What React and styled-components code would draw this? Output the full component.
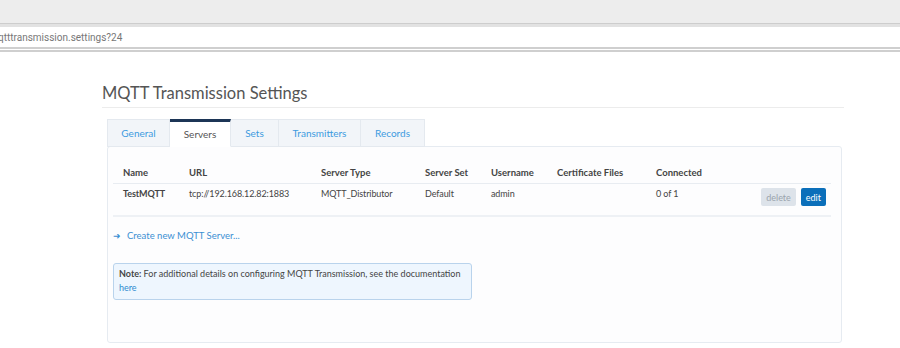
import React from "react";
import styled, { createGlobalStyle } from "styled-components";

const Global = createGlobalStyle`
  html, body { margin: 0; padding: 0; background: #ffffff; }
  body { font-family: Lato, "Open Sans", sans-serif; color: #444; overflow: hidden; }
`;

const BrowserTop = styled.div`
  height: 23px;
  background: #ededed;
  border-bottom: 1px solid #cdcdcd;
`;

const AddressBar = styled.div`
  height: 20px;
  background: #ffffff;
  border-top: 3px solid #e2e2e2;
  border-bottom: 5px double #cfcfcf;
  display: flex;
  align-items: center;
  font-family: Roboto, "Noto Sans", sans-serif;
  font-size: 10px;
  color: #777;
`;

const UrlText = styled.span`
  margin-left: -2px;
  white-space: nowrap;
`;

const Main = styled.main`
  margin-left: 102px;
  width: 742px;
  padding-top: 29px;
`;

const Title = styled.h1`
  margin: 0;
  font-weight: 400;
  font-size: 16.5px;
  line-height: 24px;
  color: #555;
  padding-bottom: 2px;
  border-bottom: 1px solid #ececec;
`;

const Tabs = styled.nav`
  display: flex;
  margin: 11px 0 0 5px;
`;

const Tab = styled.div`
  box-sizing: border-box;
  height: 28px;
  width: ${(p) => p.$w}px;
  display: flex;
  align-items: center;
  justify-content: center;
  font-size: 10px;
  color: ${(p) => (p.$active ? "#555" : "#3d9be0")};
  background: ${(p) => (p.$active ? "#ffffff" : "#f2f5f9")};
  border: 1px solid #e4e9ef;
  border-top: ${(p) => (p.$active ? "3px solid #1c3556" : "1px solid #e4e9ef")};
  border-bottom: ${(p) => (p.$active ? "1px solid #fff" : "1px solid #e4e9ef")};
  border-left: ${(p) => (p.$first ? "1px solid #e4e9ef" : "none")};
  margin-bottom: -1px;
  position: relative;
  z-index: 1;
`;

const Panel = styled.section`
  box-sizing: border-box;
  margin-left: 5px;
  width: 735px;
  height: 197px;
  border: 1px solid #e6ebf1;
  border-radius: 3px;
  background: #fdfdfe;
  padding: 20px 10px 0 5px;
`;

const Table = styled.div`
  display: grid;
  grid-template-columns: 66px 132px 104px 66px 66px 99px 1fr auto;
  width: 718px;
  color: #444;
`;

const HeadCell = styled.div`
  font-weight: 700;
  font-size: 9.5px;
  padding: 0 0 4px 10px;
  height: 12px;
  line-height: 12px;
  border-bottom: 1px solid #e8ecf1;
  white-space: nowrap;
`;

const Cell = styled.div`
  font-weight: ${(p) => (p.$bold ? 700 : 400)};
  font-size: 9px;
  letter-spacing: -0.1px;
  padding: 4px 0 0 10px;
  height: 27px;
  line-height: 12px;
  border-bottom: 2px solid #eef1f5;
  white-space: nowrap;
`;

const Actions = styled.div`
  display: flex;
  gap: 5px;
  padding: 4px 5px 0 10px;
  height: 27px;
  border-bottom: 2px solid #eef1f5;
`;

const Btn = styled.button`
  height: 18px;
  padding: 0 5px;
  border: none;
  border-radius: 2px;
  font-family: Lato, "Open Sans", sans-serif;
  font-size: 9px;
  background: ${(p) => (p.$primary ? "#0b6fba" : "#dde3ea")};
  color: ${(p) => (p.$primary ? "#ffffff" : "#9aa3ad")};
  cursor: pointer;
`;

const CreateLink = styled.a`
  display: flex;
  align-items: center;
  gap: 6px;
  margin: 12px 0 0 0;
  font-size: 9.5px;
  color: #3b8fd3;
  text-decoration: none;
  height: 12px;
`;

const Arrow = styled.span`
  font-size: 9px;
  color: #3b8fd3;
`;

const Note = styled.div`
  box-sizing: border-box;
  width: 359px;
  margin: 22px 0 0 0;
  padding: 3px 5px 4px;
  border: 1px solid #b9d3ec;
  border-radius: 3px;
  background: #eef6fe;
  font-size: 9px;
  line-height: 14px;
  color: #444;
  white-space: nowrap;
  strong { font-weight: 700; }
`;

const NoteLink = styled.a`
  color: #2f8cd0;
  text-decoration: none;
`;

const tabs = [
  { label: "General", w: 63 },
  { label: "Servers", w: 61, active: true },
  { label: "Sets", w: 48 },
  { label: "Transmitters", w: 82 },
  { label: "Records", w: 64 },
];

const headers = ["Name", "URL", "Server Type", "Server Set", "Username", "Certificate Files", "Connected", ""];

export default function App() {
  return (
    <>
      <Global />
      <BrowserTop />
      <AddressBar>
        <UrlText>qtttransmission.settings?24</UrlText>
      </AddressBar>
      <Main>
        <Title>MQTT Transmission Settings</Title>
        <Tabs>
          {tabs.map((t, i) => (
            <Tab key={t.label} $w={t.w} $active={t.active} $first={i === 0}>
              {t.label}
            </Tab>
          ))}
        </Tabs>
        <Panel>
          <Table>
            {headers.map((h, i) => (
              <HeadCell key={i}>{h}</HeadCell>
            ))}
            <Cell $bold>TestMQTT</Cell>
            <Cell>tcp://192.168.12.82:1883</Cell>
            <Cell>MQTT_Distributor</Cell>
            <Cell>Default</Cell>
            <Cell>admin</Cell>
            <Cell></Cell>
            <Cell>0 of 1</Cell>
            <Actions>
              <Btn>delete</Btn>
              <Btn $primary>edit</Btn>
            </Actions>
          </Table>
          <CreateLink href="#">
            <Arrow>➜</Arrow>
            Create new MQTT Server...
          </CreateLink>
          <Note>
            <strong>Note:</strong> For additional details on configuring MQTT Transmission, see the documentation
            <br />
            <NoteLink href="#">here</NoteLink>
          </Note>
        </Panel>
      </Main>
    </>
  );
}
